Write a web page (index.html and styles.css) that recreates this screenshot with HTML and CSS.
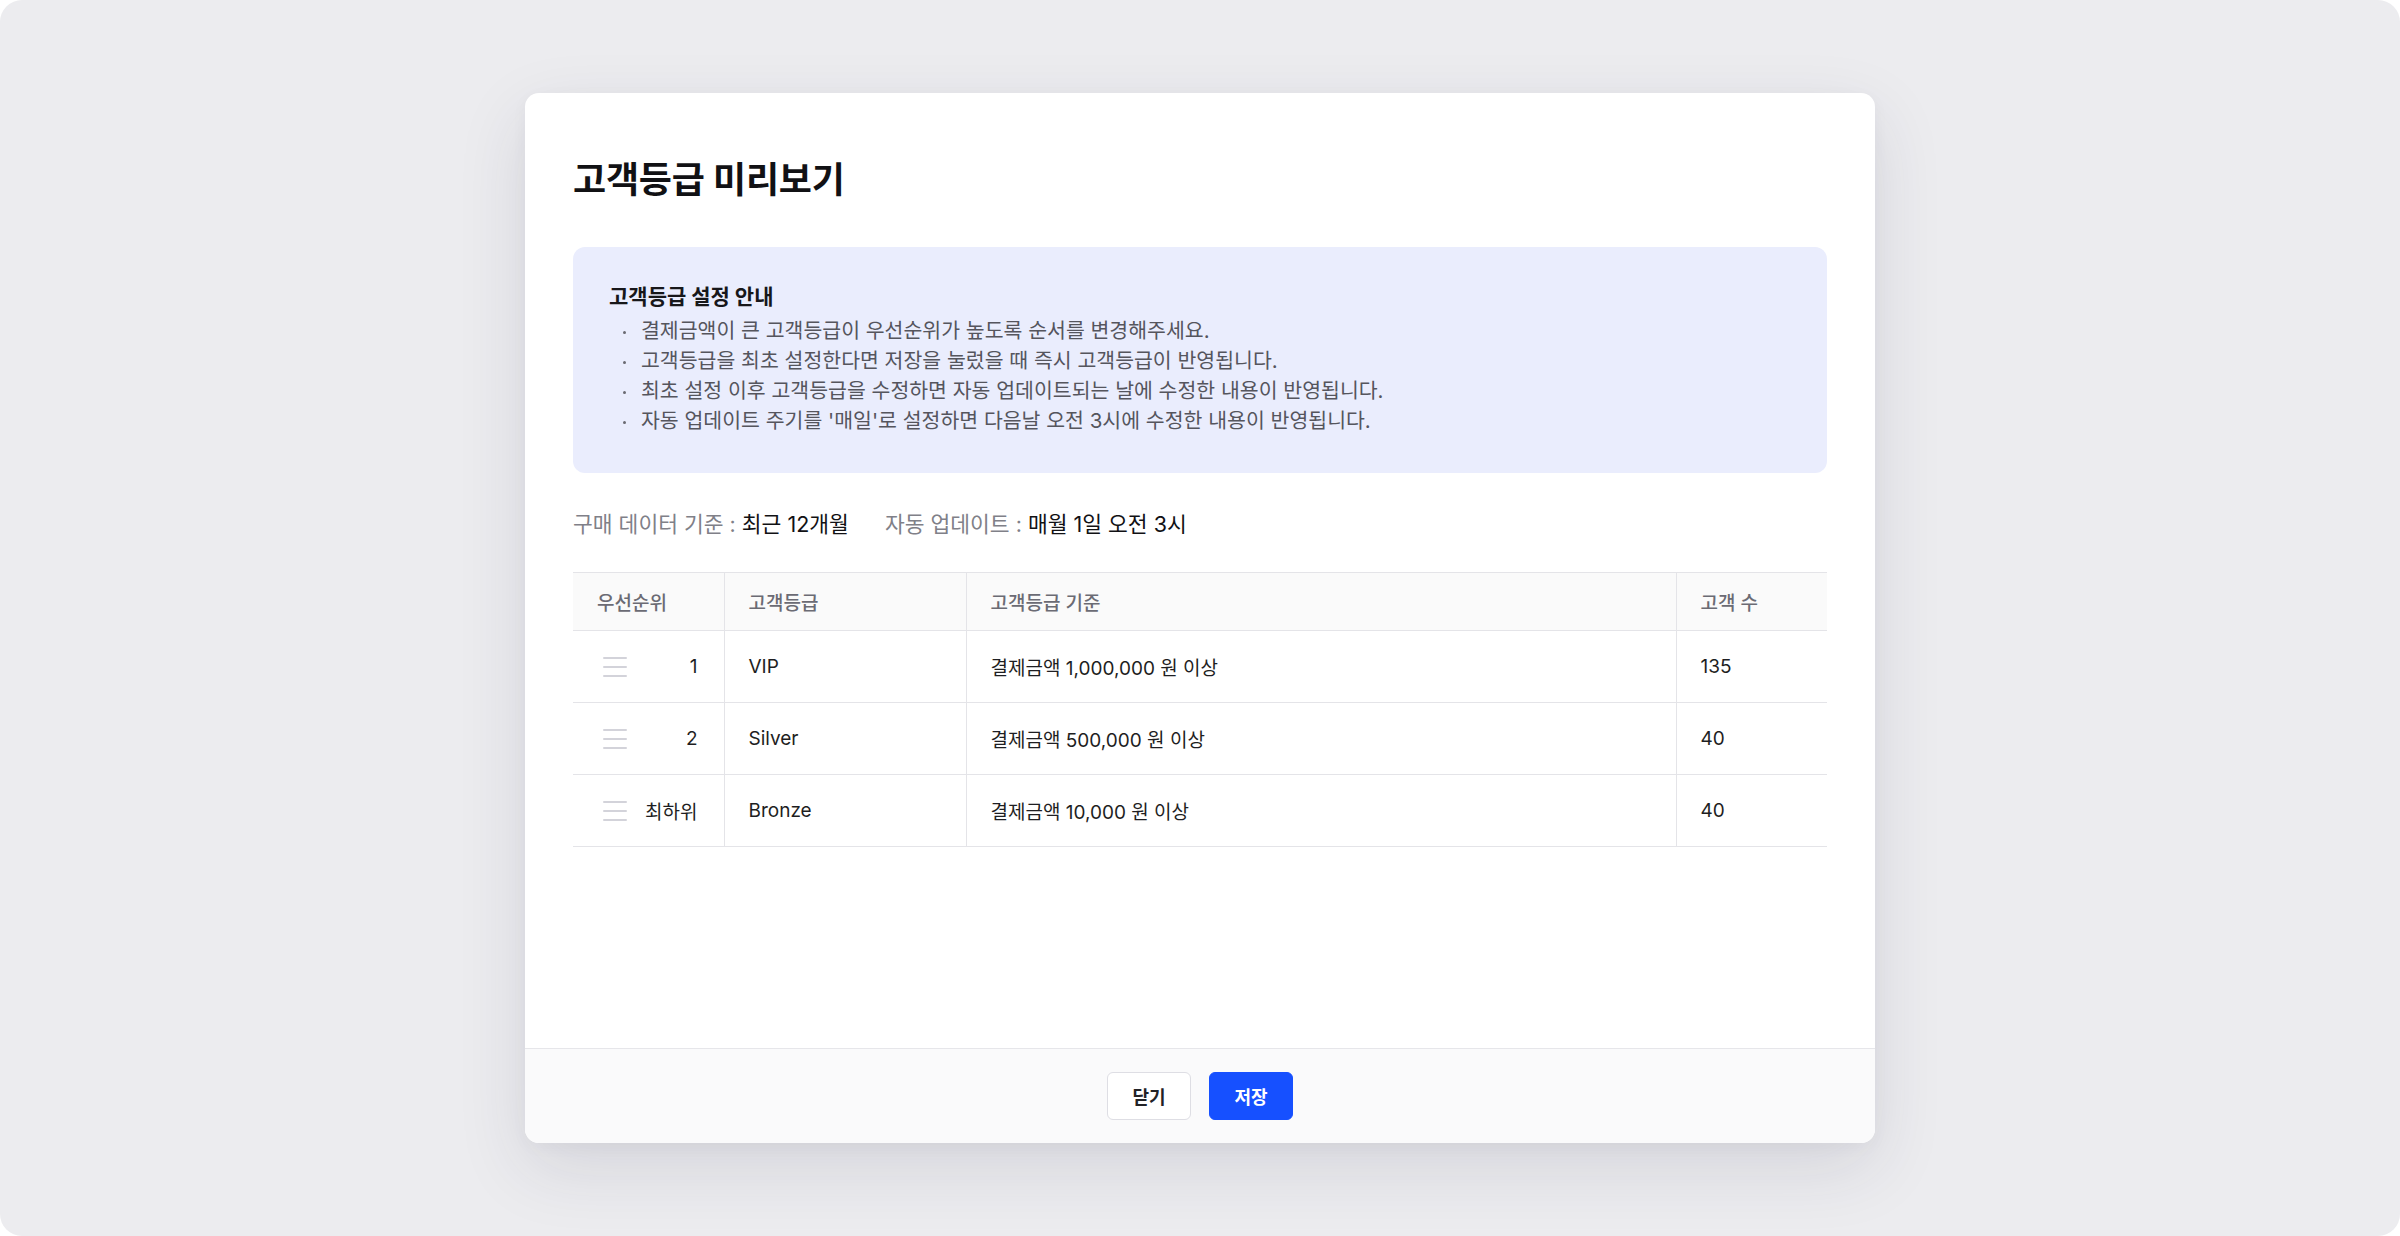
FILE: index.html
```html
<!DOCTYPE html>
<html lang="ko">
<head>
<meta charset="utf-8">
<title>고객등급 미리보기</title>
<link rel="stylesheet" href="styles.css">
</head>
<body>
<div class="screen">
  <div class="modal">
    <div class="modal-body">
      <h1 class="title">고객등급 미리보기</h1>
      <div class="notice">
        <div class="notice-title">고객등급 설정 안내</div>
        <ul class="notice-list">
          <li>결제금액이 큰 고객등급이 우선순위가 높도록 순서를 변경해주세요.</li>
          <li>고객등급을 최초 설정한다면 저장을 눌렀을 때 즉시 고객등급이 반영됩니다.</li>
          <li>최초 설정 이후 고객등급을 수정하면 자동 업데이트되는 날에 수정한 내용이 반영됩니다.</li>
          <li>자동 업데이트 주기를 '매일'로 설정하면 다음날 오전 3시에 수정한 내용이 반영됩니다.</li>
        </ul>
      </div>
      <div class="meta">
        <span class="meta-item"><span class="meta-label">구매 데이터 기준 :</span> <span class="meta-value">최근 12개월</span></span>
        <span class="meta-item"><span class="meta-label">자동 업데이트 :</span> <span class="meta-value">매월 1일 오전 3시</span></span>
      </div>
      <table class="grade-table">
        <colgroup>
          <col class="c-priority">
          <col class="c-grade">
          <col class="c-criteria">
          <col class="c-count">
        </colgroup>
        <thead>
          <tr>
            <th>우선순위</th>
            <th>고객등급</th>
            <th>고객등급 기준</th>
            <th>고객 수</th>
          </tr>
        </thead>
        <tbody>
          <tr>
            <td><div class="prio"><span class="handle"><i></i><i></i><i></i></span><span>1</span></div></td>
            <td>VIP</td>
            <td>결제금액 1,000,000 원 이상</td>
            <td>135</td>
          </tr>
          <tr>
            <td><div class="prio"><span class="handle"><i></i><i></i><i></i></span><span>2</span></div></td>
            <td>Silver</td>
            <td>결제금액 500,000 원 이상</td>
            <td>40</td>
          </tr>
          <tr>
            <td><div class="prio"><span class="handle"><i></i><i></i><i></i></span><span>최하위</span></div></td>
            <td>Bronze</td>
            <td>결제금액 10,000 원 이상</td>
            <td>40</td>
          </tr>
        </tbody>
      </table>
    </div>
    <div class="modal-footer">
      <button class="btn btn-secondary" type="button">닫기</button>
      <button class="btn btn-primary" type="button">저장</button>
    </div>
  </div>
</div>
</body>
</html>
```
FILE: styles.css
```css
* { box-sizing: border-box; }

html, body {
  margin: 0;
  padding: 0;
  background: #ffffff;
}

body {
  font-family: Inter, "Noto Sans CJK KR", sans-serif;
  color: #222226;
}

.screen {
  width: 2400px;
  height: 1236px;
  background: #ececef;
  border-radius: 22px;
  display: flex;
  align-items: center;
  justify-content: center;
}

.modal {
  width: 1350px;
  height: 1050px;
  background: #ffffff;
  border-radius: 14px;
  box-shadow: 0 24px 70px rgba(40, 40, 70, 0.12), 0 4px 16px rgba(40, 40, 70, 0.04);
  display: flex;
  flex-direction: column;
  overflow: hidden;
}

.modal-body {
  flex: 1;
  padding: 64px 48px 0;
}

.title {
  margin: 0;
  font-size: 36px;
  line-height: 46px;
  font-weight: 700;
  color: #111114;
  letter-spacing: -0.2px;
}

.notice {
  margin-top: 44px;
  background: #eaedfd;
  border-radius: 12px;
  padding: 36px 36px 37px;
}

.notice-title {
  font-size: 21px;
  line-height: 28px;
  font-weight: 700;
  color: #17171a;
  margin-bottom: 5px;
}

.notice-list {
  margin: 0;
  padding: 0 0 0 14px;
  list-style: none;
}

.notice-list li {
  position: relative;
  padding-left: 18px;
  font-size: 20.5px;
  line-height: 30px;
  color: #55555d;
}

.notice-list li::before {
  content: "";
  position: absolute;
  left: 0;
  top: 15px;
  width: 3px;
  height: 3px;
  border-radius: 50%;
  background: #6a6a72;
}

.meta {
  margin-top: 37px;
  display: flex;
  gap: 36px;
  font-size: 21.5px;
  line-height: 28px;
}

.meta-label {
  color: #808088;
}

.meta-value {
  color: #111114;
}

.grade-table {
  margin-top: 34px;
  width: 100%;
  border-collapse: collapse;
  table-layout: fixed;
  font-size: 19px;
}

.c-priority { width: 151px; }
.c-grade { width: 242px; }
.c-count { width: 151px; }

.grade-table th,
.grade-table td {
  text-align: left;
  padding: 0 24px;
  border-bottom: 1px solid #e4e4e8;
}

.grade-table th + th,
.grade-table td + td {
  border-left: 1px solid #e4e4e8;
}

.grade-table thead th {
  height: 58px;
  background: #fafafa;
  border-top: 1px solid #e4e4e8;
  font-size: 19px;
  font-weight: 500;
  color: #6b6b74;
}

.grade-table tbody td {
  height: 72px;
  color: #1e1e22;
}

.prio {
  display: flex;
  align-items: center;
  justify-content: space-between;
  padding-left: 6px;
  padding-right: 2px;
}

.handle {
  display: flex;
  flex-direction: column;
  gap: 7px;
  width: 24px;
}

.handle i {
  display: block;
  height: 2px;
  background: #d3d3da;
  border-radius: 1px;
}

.modal-footer {
  height: 95px;
  border-top: 1px solid #e6e6ea;
  background: #fafafb;
  display: flex;
  align-items: center;
  justify-content: center;
  gap: 18px;
}

.btn {
  width: 84px;
  height: 48px;
  border-radius: 6px;
  font-family: Inter, "Noto Sans CJK KR", sans-serif;
  font-size: 18px;
  font-weight: 700;
  cursor: pointer;
}

.btn-secondary {
  background: #ffffff;
  border: 1px solid #dedee4;
  color: #222226;
}

.btn-primary {
  background: #1650ff;
  border: 1px solid #1650ff;
  color: #ffffff;
}
```
